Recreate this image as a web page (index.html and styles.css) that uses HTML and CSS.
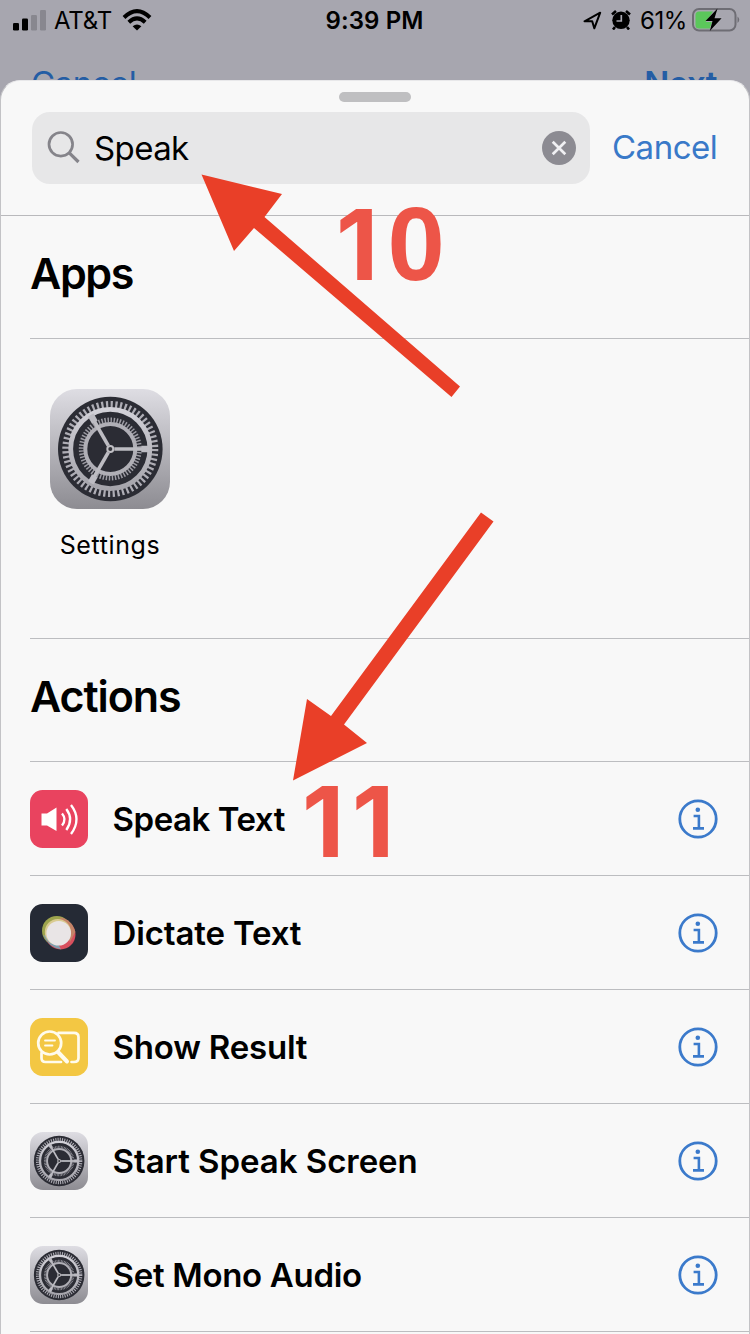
FILE: index.html
```
<!DOCTYPE html>
<html lang="en">
<head>
<meta charset="utf-8">
<title>Shortcuts</title>
<link rel="stylesheet" href="styles.css">
</head>
<body>
<svg class="defs" width="0" height="0" aria-hidden="true">
  <defs>
    <linearGradient id="metal" x1="0" y1="0" x2="0" y2="1"><stop offset="0" stop-color="#dedde3"/><stop offset="1" stop-color="#8d8c92"/></linearGradient>
    <linearGradient id="ring" x1="0" y1="0" x2="0" y2="1"><stop offset="0" stop-color="#d2d1d8"/><stop offset="1" stop-color="#a5a4ab"/></linearGradient>
    <symbol id="gear" viewBox="0 0 120 120">
      <rect width="120" height="120" rx="27" fill="url(#metal)"/>
      <g transform="translate(60.3 60)">
        <circle r="52.3" fill="#2b2c34"/>
        <circle r="44.5" fill="none" stroke="#aeadb5" stroke-width="7" stroke-dasharray="2.2 2.46"/>
        <circle r="39.6" fill="none" stroke="url(#ring)" stroke-width="4.8"/>
        <circle r="29" fill="none" stroke="#9d9ca4" stroke-width="5" stroke-dasharray="1.45 1.587"/>
        <circle r="25" fill="none" stroke="#b0afb6" stroke-width="4"/>
        <g stroke="#bdbcc2" stroke-width="3.6">
          <path d="M4 0H39"/><path d="M4 0H39" transform="rotate(120)"/><path d="M4 0H39" transform="rotate(240)"/>
        </g>
        <g stroke="#bdbcc3" stroke-width="6.5">
          <path d="M31 0H39"/><path d="M31 0H39" transform="rotate(120)"/><path d="M31 0H39" transform="rotate(240)"/>
        </g>
        <circle r="4" fill="#c0bfc4"/><circle r="2" fill="#33343a"/>
      </g>
    </symbol>
    <symbol id="info" viewBox="0 0 40 40">
      <circle cx="20" cy="20" r="18.2" fill="none" stroke="#3b7acb" stroke-width="2.8"/>
      <circle cx="19.8" cy="10.8" r="2.3" fill="#3b7acb"/>
      <path d="M15.6 17H20.9V29.2M15 29.4H26" fill="none" stroke="#3b7acb" stroke-width="2.6"/>
    </symbol>
  </defs>
</svg>

<div class="phone">
  <header class="status">
    <div class="status-left">
      <svg width="33" height="21" viewBox="0 0 33 21"><rect x="0" y="13" width="6" height="7.5" rx="1.3"/><rect x="9" y="8.5" width="6" height="12" rx="1.3"/><rect x="18" y="5" width="6" height="15.5" rx="1.3" fill="#88878f"/><rect x="27" y="0" width="6" height="20.5" rx="1.3" fill="#88878f"/></svg>
      <span class="carrier">AT&amp;T</span>
      <svg width="30" height="22" viewBox="0 0 30 22" fill="none" stroke="#000" stroke-width="4"><path d="M2 8.500Q15-4.200 28 8.500"/><path d="M6.800 13.300Q15 5.600 23.200 13.300"/><path d="M15 21.500L10.600 17.200Q15 13.600 19.400 17.200Z" fill="#000" stroke="none"/></svg>
    </div>
    <span class="time">9:39 PM</span>
    <div class="status-right">
      <svg width="19" height="19" viewBox="0 0 19 19"><path d="M1.500 10.300L17.200 1.700L11.300 17.300L9.200 10.200Z" fill="none" stroke="#000" stroke-width="2" stroke-linejoin="round"/></svg>
      <svg width="20" height="20" viewBox="0 0 20 20"><circle cx="10" cy="10.300" r="8.700"/><path d="M1 4.500L5 1M19 4.500L15 1M4 17L2 19.500M16 17L18 19.500" stroke="#000" stroke-width="2.600"/><path d="M10.300 5V11H5.500" fill="none" stroke="#aaa9b2" stroke-width="1.700"/></svg>
      <span class="percent">61%</span>
      <svg width="48" height="26" viewBox="0 0 48 26"><rect x="1" y="2" width="42.500" height="21.500" rx="6" fill="none" stroke="#6e6d74" stroke-width="2"/><path d="M7 4.500H21L14 15H20L18 21.500H7Q3.500 21.500 3.500 18V8Q3.500 4.500 7 4.500Z" fill="#5bc75b"/><path d="M24 4.500H28L27 10H32L22 21.500H18L20 15H14Z" fill="#aaa9b2"/><path d="M25.500 1.500L13.500 14H20.500L17.800 24L29.600 11.300H22.500Z"/><path d="M45.500 9.500Q49 12.700 45.500 16Z" fill="#6e6d74"/></svg>
    </div>
  </header>
  <nav class="under"><span class="under-cancel">Cancel</span><span class="under-next">Next</span></nav>

  <main class="sheet">
    <div class="search-area">
      <div class="grabber"></div>
      <div class="search-row">
        <div class="field">
          <svg width="34" height="34" viewBox="0 0 34 34" fill="none" stroke="#85848a" stroke-width="2.700"><circle cx="13.800" cy="13.300" r="11.800"/><path d="M22 21.700L31.500 31" stroke-width="3.200"/></svg>
          <span class="query">Speak</span>
          <svg width="34" height="34" viewBox="0 0 34 34"><circle cx="17" cy="17" r="17" fill="#8c8b92"/><path d="M10.700 10.700L23.300 23.300M23.300 10.700L10.700 23.300" stroke="#f0f0f3" stroke-width="2.700"/></svg>
        </div>
        <span class="cancel">Cancel</span>
      </div>
    </div>
    <h2 class="heading apps-title">Apps</h2>
    <section class="apps">
      <div class="app"><svg width="120" height="120"><use href="#gear"/></svg><span class="app-name">Settings</span></div>
    </section>
    <h2 class="heading actions-title">Actions</h2>
    <section class="actions">
      <div class="action">
        <svg class="tile" viewBox="0 0 58 58"><rect width="58" height="58" rx="12.500" fill="#e9435f"/><path d="M11.500 23.500H17L26.500 17.500V41L17 35.500H11.500Z" fill="#fff"/><g fill="none" stroke="#fff" stroke-width="2.300"><path d="M32 23.500Q37 29.300 32 35.500"/><path d="M36.300 19Q44 29.300 36.300 40"/><path d="M41 15Q52 29.300 41 44"/></g></svg>
        <span class="label l1">Speak Text</span><svg class="info"><use href="#info"/></svg>
      </div>
      <div class="action">
        <svg class="tile" viewBox="0 0 58 58"><rect width="58" height="58" rx="12.500" fill="#252a35"/><circle cx="26.800" cy="26.800" r="14.800" fill="#9da44d"/><circle cx="30.500" cy="30.500" r="15" fill="#d84f5e"/><path d="M30 13.500Q42 15 45.300 28L40 38Z" fill="#c58468"/><path d="M13.500 31Q18 43 31 45.300L26 36Z" fill="#809eae"/><circle cx="27.800" cy="28" r="13" fill="#d9cb91"/><circle cx="28.700" cy="29.200" r="12.300" fill="#e9e5e6"/></svg>
        <span class="label l2">Dictate Text</span><svg class="info"><use href="#info"/></svg>
      </div>
      <div class="action">
        <svg class="tile" viewBox="0 0 58 58"><rect width="58" height="58" rx="12.500" fill="#f3c743"/><g fill="none" stroke="#fffbed" stroke-width="2.700" stroke-linecap="round" stroke-linejoin="round"><circle cx="19.700" cy="25" r="11.500"/><path d="M28 34L37 43.500" stroke-width="4"/><path d="M28.500 14.800H44Q48.500 14.800 48.500 19V40Q48.500 44 44 44H41.500M11.500 35V40Q11.500 44 15.500 44H31"/><path d="M15 22.500H25M15 27.500H22.500" stroke-width="1.800"/></g></svg>
        <span class="label l3">Show Result</span><svg class="info"><use href="#info"/></svg>
      </div>
      <div class="action"><svg class="tile"><use href="#gear"/></svg><span class="label l4">Start Speak Screen</span><svg class="info"><use href="#info"/></svg></div>
      <div class="action"><svg class="tile"><use href="#gear"/></svg><span class="label l5">Set Mono Audio</span><svg class="info"><use href="#info"/></svg></div>
    </section>
  </main>

  <svg class="annotations" width="750" height="1334" viewBox="0 0 750 1334">
    <g fill="#e93f28">
      <path d="M201.500 174.500L282 194L264.500 217L460 386.500L451.500 397L254 228L234 251Z"/>
      <path d="M293 780.500L307 699L331 716L481 512.500L493.500 521.500L344 724.500L367 743Z"/>
    </g>
    <g class="numbers">
      <text x="336" y="280" class="one">1</text><text x="387.500" y="280" class="zero">0</text>
      <text x="302" y="857" class="one">1</text><text x="352" y="857" class="one">1</text>
    </g>
  </svg>
</div>
</body>
</html>
```
FILE: styles.css
```
* { box-sizing: border-box; }
body { margin: 0; font-family: Inter, "Liberation Sans", sans-serif; color: #000; }
svg { display: block; flex: none; }
.defs { position: absolute; }
.phone { position: relative; width: 750px; height: 1334px; overflow: hidden; background: #a7a6af; display: flex; flex-direction: column; }
.status { height: 40px; flex: none; display: grid; grid-template-columns: 1fr auto 1fr; align-items: center; padding: 0 10px 0 13px; font-size: 24px; white-space: nowrap; }
.status-left, .status-right { display: flex; align-items: center; }
.carrier { margin: 0 10px 0 8px; letter-spacing: -0.2px; }
.time { font-weight: 600; letter-spacing: 0.1px; margin-right: 4px; }
.status-right { justify-content: flex-end; gap: 9px; }
.percent { letter-spacing: -0.4px; }
.status-right svg:last-child { margin-left: -4px; }
.under { height: 40px; flex: none; overflow: hidden; display: flex; justify-content: space-between; padding: 23px 33px 0 31px; font-size: 33px; line-height: 40px; letter-spacing: -0.5px; color: #245da4; }
.under-next { font-weight: 600; }
.sheet { height: 1254px; flex: none; border: 1px solid #c3c3c6; border-top-color: #e8e8ea; border-bottom: 0; border-radius: 20px 20px 0 0; background: #f8f8f8; }
.search-area { height: 135px; border-bottom: 1px solid #b9b9bc; padding: 11px 0 0 31px; }
.grabber { width: 72px; height: 10px; border-radius: 5px; background: #bfbfc1; margin-left: 307px; }
.search-row { display: flex; align-items: center; margin-top: 10px; }
.field { width: 558px; height: 72px; border-radius: 18px; background: #e7e7e8; display: flex; align-items: center; padding: 0 14px 0 15px; }
.query { flex: 1; margin-left: 13px; font-size: 33px; letter-spacing: -0.6px; }
.cancel { color: #3979c8; font-size: 33px; letter-spacing: -0.5px; margin: 0 0 3px 22px; }
.heading { margin: 0 0 0 29px; height: 123px; border-bottom: 1px solid #bcbdc0; font-size: 43px; font-weight: 600; line-height: 114px; letter-spacing: -1.1px; }
.apps-title { letter-spacing: -1.4px; }
.apps { height: 300px; margin-left: 29px; border-bottom: 1px solid #bcbdc0; padding: 50px 0 0 20px; }
.app { width: 120px; display: flex; flex-direction: column; align-items: center; }
.app-name { margin-top: 20px; font-size: 25px; line-height: 32px; letter-spacing: 0.6px; }
.actions { margin-left: 29px; }
.action { height: 114px; border-bottom: 1px solid #bcbdc0; display: flex; align-items: center; padding-right: 31px; }
.tile { width: 58px; height: 58px; }
.info { width: 40px; height: 40px; }
.label { flex: 1; margin-left: 24.500px; font-size: 33px; font-weight: 600; white-space: nowrap; }
.l1 { letter-spacing: -0.45px; }
.l2 { letter-spacing: -0.15px; }
.l3 { letter-spacing: -0.2px; }
.l4 { letter-spacing: -0.05px; }
.l5 { letter-spacing: -0.3px; }
.annotations { position: absolute; left: 0; top: 0; }
.numbers { fill: #ed5548; font-weight: 700; }
.one { font-family: Inter, sans-serif; font-size: 98px; }
.zero { font-family: "Liberation Sans", Arial, sans-serif; font-size: 103px; }
```
